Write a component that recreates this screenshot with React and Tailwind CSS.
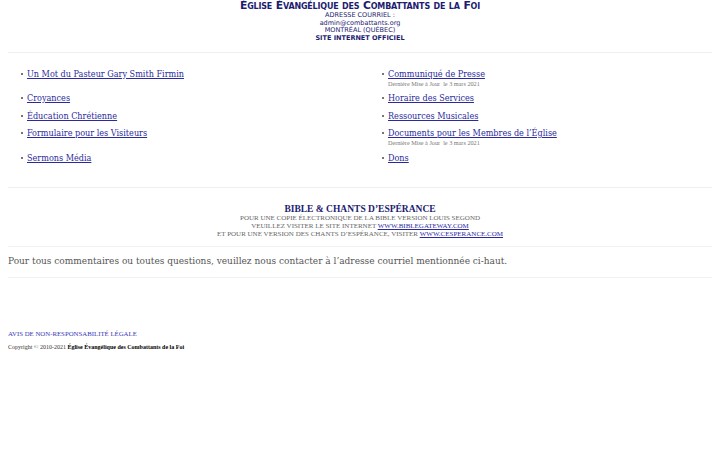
import React from "react";

const serif = "font-['DejaVu_Serif_Condensed','DejaVu_Serif',serif] [font-stretch:condensed]";
const times = "font-['Liberation_Serif',serif]";
const sans = "font-['DejaVu_Sans',sans-serif]";

function Item({ label, sub, right }) {
  return (
    <div className={`flex items-start ${right ? "pl-[22px]" : "pl-[13px]"}`}>
      <span className="mt-[5px] mr-[4px] w-[2px] h-[2px] bg-[#777]" />
      <div className="flex flex-col">
        <a href="#" className={`${serif} text-[9px] leading-[12px] text-[#2a2a9e] underline`}>{label}</a>
        {sub && (
          <span className={`${times} text-[6.2px] leading-[7px] text-[#777]`}>Dernière Mise à Jour&nbsp; le 3 mars 2021</span>
        )}
      </div>
    </div>
  );
}

export default function App() {
  const rows = [
    [{ label: "Un Mot du Pasteur Gary Smith Firmin" }, { label: "Communiqué de Presse", sub: true }, "h-[24px]"],
    [{ label: "Croyances" }, { label: "Horaire des Services" }, "h-[18px]"],
    [{ label: "Éducation Chrétienne" }, { label: "Ressources Musicales" }, "h-[17px]"],
    [{ label: "Formulaire pour les Visiteurs" }, { label: "Documents pour les Membres de l’Église", sub: true }, "h-[25px]"],
    [{ label: "Sermons Média" }, { label: "Dons" }, "h-[18px]"],
  ];
  return (
    <div className="w-[720px] h-[450px] bg-white px-[8px] overflow-hidden">
      <div className={`${sans} text-center text-[#1c1c70]`}>
        <div className="text-[10.8px] leading-[11px] tracking-[-0.18px] font-bold [font-variant:small-caps]">Église Évangélique des Combattants de la Foi</div>
        <div className="text-[6.5px] leading-[7.7px] mt-[1px]">ADRESSE COURRIEL :</div>
        <div className="text-[6.5px] leading-[7.7px]">admin@combattants.org</div>
        <div className="text-[6.5px] leading-[7.7px]">MONTRÉAL (QUÉBEC)</div>
        <div className="text-[6.5px] leading-[7.7px] font-bold">SITE INTERNET OFFICIEL</div>
      </div>
      <div className="mt-[9px] h-[1px] bg-[#eeeeee]" />
      <div className="pt-[15px] flex flex-col">
        {rows.map(([l, r, h], i) => (
          <div key={i} className={`grid grid-cols-2 ${h}`}>
            <Item {...l} />
            <Item {...r} right />
          </div>
        ))}
      </div>
      <div className="mt-[17px] h-[1px] bg-[#eeeeee]" />
      <div className={`${times} text-center pt-[16px]`}>
        <div className="text-[9.5px] leading-[10px] font-bold text-[#1c1c70]">BIBLE &amp; CHANTS D’ESPÉRANCE</div>
        <div className="text-[7px] leading-[8px] text-[#666]">POUR UNE COPIE ÉLECTRONIQUE DE LA BIBLE VERSION LOUIS SEGOND</div>
        <div className="text-[7px] leading-[8px] text-[#666]">VEUILLEZ VISITER LE SITE INTERNET <a href="#" className="underline text-[#2a2a9e]">WWW.BIBLEGATEWAY.COM</a></div>
        <div className="text-[7px] leading-[8px] text-[#666]">ET POUR UNE VERSION DES CHANTS D’ESPÉRANCE, VISITER <a href="#" className="underline text-[#2a2a9e]">WWW.CESPERANCE.COM</a></div>
      </div>
      <div className="mt-[8px] h-[1px] bg-[#f2f2f2]" />
      <div className={`${serif} text-[10px] leading-[12px] text-[#555] pt-[8px]`}>Pour tous commentaires ou toutes questions, veuillez nous contacter à l’adresse courriel mentionnée ci-haut.</div>
      <div className="mt-[10px] h-[1px] bg-[#f2f2f2]" />
      <div className={`${times} pt-[52px]`}>
        <a href="#" className="block text-[6.8px] leading-[8px] text-[#3838b8]">AVIS DE NON-RESPONSABILITÉ LÉGALE</a>
        <div className="mt-[6px] text-[6px] leading-[6px] text-[#333]">Copyright © 2010-2021 <b className="text-black">Église Évangélique des Combattants de la Foi</b></div>
      </div>
    </div>
  );
}
